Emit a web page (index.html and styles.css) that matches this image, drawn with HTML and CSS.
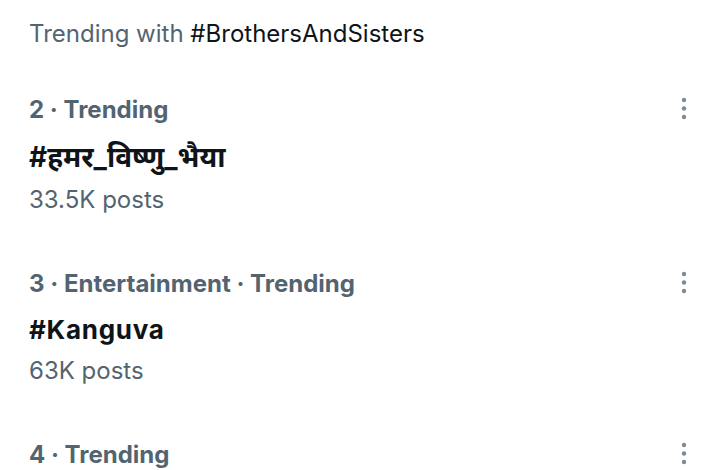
FILE: index.html
```html
<!DOCTYPE html>
<html lang="en">
<head>
<meta charset="utf-8">
<title>Trending</title>
<link rel="stylesheet" href="styles.css">
</head>
<body>
<main class="feed">
  <p class="context">Trending with <span class="tag">#BrothersAndSisters</span></p>

  <section class="trend">
    <div class="trend-body">
      <div class="meta">2 · Trending</div>
      <div class="title title-hi" lang="hi">#हमर_विष्णु_भैया</div>
      <div class="posts">33.5K posts</div>
    </div>
    <svg class="more" viewBox="0 0 20 30" width="20" height="30" aria-hidden="true">
      <circle cx="10" cy="5" r="2.2"/>
      <circle cx="10" cy="13.5" r="2.2"/>
      <circle cx="10" cy="22" r="2.2"/>
    </svg>
  </section>

  <section class="trend">
    <div class="trend-body">
      <div class="meta">3 · Entertainment · Trending</div>
      <div class="title title-en">#Kanguva</div>
      <div class="posts">63K posts</div>
    </div>
    <svg class="more" viewBox="0 0 20 30" width="20" height="30" aria-hidden="true">
      <circle cx="10" cy="5" r="2.2"/>
      <circle cx="10" cy="13.5" r="2.2"/>
      <circle cx="10" cy="22" r="2.2"/>
    </svg>
  </section>

  <section class="trend">
    <div class="trend-body">
      <div class="meta">4 · Trending</div>
    </div>
    <svg class="more" viewBox="0 0 20 30" width="20" height="30" aria-hidden="true">
      <circle cx="10" cy="5" r="2.2"/>
      <circle cx="10" cy="13.5" r="2.2"/>
      <circle cx="10" cy="22" r="2.2"/>
    </svg>
  </section>
</main>
</body>
</html>
```

FILE: styles.css
```css
html, body {
  margin: 0;
  padding: 0;
  background: #ffffff;
}

body {
  width: 720px;
  height: 470px;
  overflow: hidden;
  font-family: Inter, "Noto Sans", "Noto Sans Devanagari", "Lohit Devanagari", sans-serif;
  font-size: 24px;
  line-height: 30px;
  color: #536471;
}

.feed {
  display: flex;
  flex-direction: column;
  padding: 19px 26px 0 29px;
}

.context {
  margin: 0 0 19px;
  color: #536471;
}

.tag {
  color: #0f1419;
}

.trend {
  display: flex;
  justify-content: space-between;
  align-items: flex-start;
  padding: 27px 0;
}

.trend-body {
  display: flex;
  flex-direction: column;
}

.meta {
  font-weight: 700;
  color: #536471;
}

.title {
  margin-top: 16px;
  font-weight: 700;
  color: #0f1419;
}

.title-en {
  font-size: 26px;
  letter-spacing: 0.7px;
}

.title-hi {
  font-size: 28px;
  line-height: 33px;
}

.posts {
  margin-top: 11px;
  color: #536471;
}

.more {
  flex: none;
  fill: #7f8a94;
}
```
